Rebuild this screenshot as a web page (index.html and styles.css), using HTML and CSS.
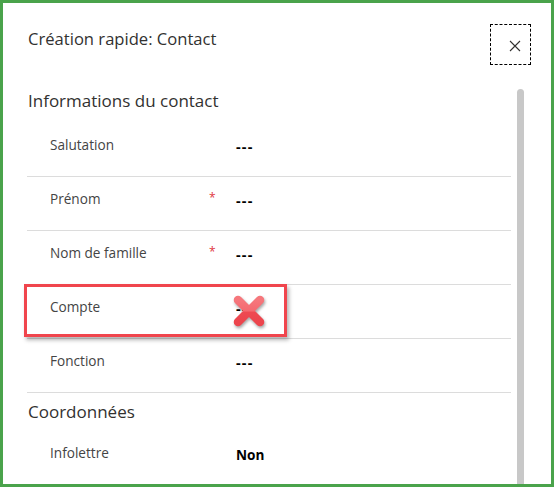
FILE: index.html
```html
<!DOCTYPE html>
<html lang="fr">
<head>
    <meta charset="UTF-8">
    <meta name="viewport" content="width=device-width, initial-scale=1.0">
    <title>Création rapide: Contact</title>
    <link rel="stylesheet" href="styles.css">
</head>
<body>

<div class="frame">
    <!-- En-tête du formulaire -->
    <div class="header">
        <h1 class="title">Création rapide: Contact</h1>
        <button class="close" aria-label="Fermer">
            <svg width="12" height="12" viewBox="0 0 12 12">
                <path d="M1 1 L11 11 M11 1 L1 11" stroke="#323130" stroke-width="1.1" fill="none"/>
            </svg>
        </button>
    </div>

    <div class="body">
        <div class="content">
            <h2 class="section">Informations du contact</h2>

            <div class="row">
                <span class="label">Salutation</span>
                <span class="value">---</span>
            </div>
            <div class="row">
                <span class="label">Prénom<span class="req">*</span></span>
                <span class="value">---</span>
            </div>
            <div class="row">
                <span class="label">Nom de famille<span class="req">*</span></span>
                <span class="value">---</span>
            </div>
            <div class="row">
                <span class="label">Compte</span>
                <span class="value">---</span>
                <!-- Annotation : champ retiré -->
                <div class="mark">
                    <svg class="cross" width="34" height="34" viewBox="0 0 34 34">
                        <defs>
                            <linearGradient id="crossFill" x1="0" y1="0" x2="0" y2="1">
                                <stop offset="0" stop-color="#f6777c"/>
                                <stop offset="0.5" stop-color="#f46a70"/>
                                <stop offset="0.55" stop-color="#ee4a52"/>
                                <stop offset="1" stop-color="#ec454d"/>
                            </linearGradient>
                        </defs>
                        <path d="M6 6 L28 28 M28 6 L6 28" stroke="url(#crossFill)" stroke-width="8.5" stroke-linecap="round" fill="none"/>
                    </svg>
                </div>
            </div>
            <div class="row">
                <span class="label">Fonction</span>
                <span class="value">---</span>
            </div>

            <h2 class="section section-2">Coordonnées</h2>

            <div class="row row-last">
                <span class="label">Infolettre</span>
                <span class="value strong">Non</span>
            </div>
        </div>
        <div class="scrollbar"></div>
    </div>
</div>

</body>
</html>
```

FILE: styles.css
```css
body {
    margin: 0;
    padding: 0;
    font-family: "Open Sans", "Noto Sans", sans-serif;
    background-color: #ffffff;
}
.frame {
    width: 554px;
    height: 487px;
    box-sizing: border-box;
    border: 3px solid #4aa34b;
    background-color: #ffffff;
    overflow: hidden;
    display: flex;
    flex-direction: column;
}
.header {
    display: flex;
    justify-content: space-between;
    align-items: flex-start;
    height: 61px;
    flex-shrink: 0;
}
.title {
    margin: 24px 0 0 25px;
    font-size: 16.6px;
    font-weight: 400;
    line-height: 24px;
    color: #323130;
}
.close {
    width: 41px;
    height: 41px;
    margin: 21px 20px 0 0;
    padding: 2px 0 0 8px;
    border: 1px dashed #000000;
    background: none;
    display: flex;
    align-items: center;
    justify-content: center;
    cursor: pointer;
}
.body {
    display: flex;
    flex: 1;
    min-height: 0;
}
.content {
    width: 484px;
    margin-left: 24px;
}
.scrollbar {
    width: 7px;
    margin: 25px 0 0 6px;
    background-color: #c8c8c8;
    border-radius: 4px 4px 0 0;
}
.section {
    margin: 15px 0 0 1px;
    font-size: 17px;
    font-weight: 400;
    line-height: 44px;
    color: #323130;
}
.section-2 {
    margin-top: 0;
    line-height: 38px;
}
.row {
    position: relative;
    display: flex;
    height: 53px;
    box-sizing: content-box;
    border-bottom: 1px solid #dcdcdc;
    font-size: 13.6px;
    line-height: 20px;
}
.row-last {
    border-bottom: none;
}
.label {
    position: relative;
    width: 209px;
    padding: 12px 0 0 23px;
    color: #444444;
    box-sizing: border-box;
}
.req {
    position: absolute;
    left: 182px;
    top: 11px;
    color: #e0353d;
    font-size: 12px;
}
.value {
    padding-top: 14px;
    color: #000000;
    font-weight: 700;
    font-size: 14.5px;
    letter-spacing: 1.2px;
}
.strong {
    font-size: 13.6px;
    letter-spacing: 0;
}
.mark {
    position: absolute;
    left: -3px;
    top: -1px;
    width: 263px;
    height: 53px;
    box-sizing: border-box;
    border: 3px solid #f0454d;
    box-shadow: 2px 3px 4px rgba(0, 0, 0, 0.3);
}
.cross {
    position: absolute;
    left: 205px;
    top: 7px;
    filter: drop-shadow(1px 2px 1.5px rgba(0, 0, 0, 0.35));
}
```
